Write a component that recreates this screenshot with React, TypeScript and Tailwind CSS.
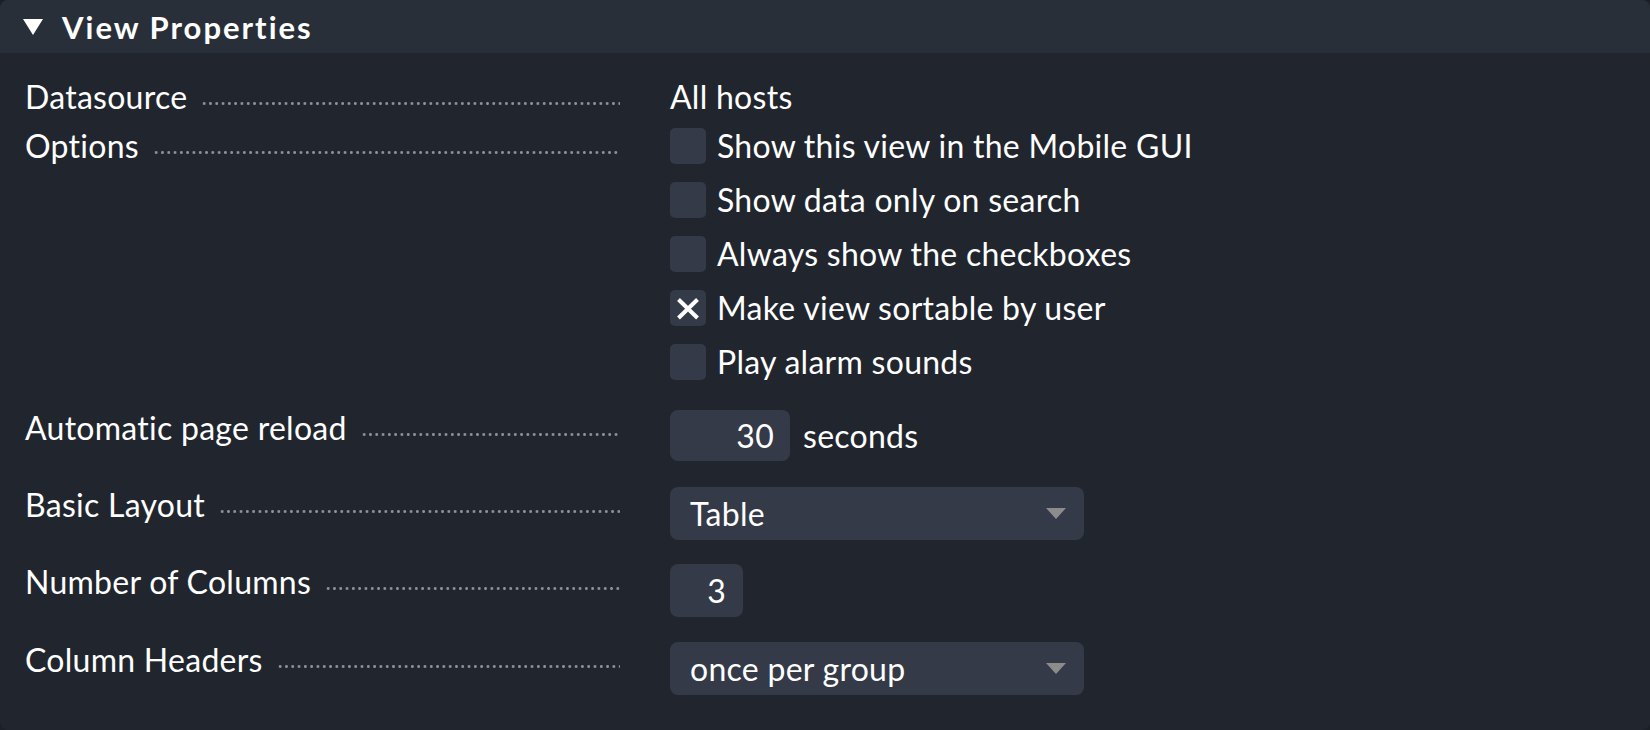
import React from "react";

const Dots: React.FC = () => (
  <span className="ml-[14px] mt-[23px] h-[3px] flex-1 bg-[radial-gradient(circle,#8f9297_1.2px,transparent_1.6px)] bg-[length:6.3px_3px] bg-repeat-x" />
);

const Row: React.FC<{ label: string; className?: string; children: React.ReactNode }> = ({
  label,
  className,
  children,
}) => (
  <div className={"flex items-start " + (className || "")}>
    <div className="flex w-[645px] shrink-0 items-start pr-[50px]">
      <span className="block whitespace-nowrap">{label}</span>
      <Dots />
    </div>
    <div>{children}</div>
  </div>
);

const Checkbox: React.FC<{ checked?: boolean }> = ({ checked }) => (
  <span className="flex h-[36px] w-[36px] shrink-0 items-center justify-center rounded-[5px] bg-[#343a47]">
    {checked && (
      <svg width="36" height="36" viewBox="0 0 36 36">
        <path d="M8.5 9.5 L27.5 28 M27.5 9.5 L8.5 28" stroke="#ffffff" strokeWidth="4" />
      </svg>
    )}
  </span>
);

const Select: React.FC<{ value: string }> = ({ value }) => (
  <div className="flex h-[53px] w-[414px] items-center justify-between rounded-[8px] bg-[#343a47] pl-[20px] pr-[18px]">
    <span>{value}</span>
    <svg width="20" height="11" viewBox="0 0 20 11">
      <path d="M0 0 L20 0 L10 11 Z" fill="#8c8c8c" />
    </svg>
  </div>
);

const options = [
  { text: "Show this view in the Mobile GUI", checked: false },
  { text: "Show data only on search", checked: false },
  { text: "Always show the checkboxes", checked: false },
  { text: "Make view sortable by user", checked: true },
  { text: "Play alarm sounds", checked: false },
];

export default function App() {
  return (
    <div className="h-[730px] w-[1650px] overflow-hidden bg-[#1b1f26] font-['Lato',sans-serif] text-[32px] leading-[36px] tracking-[0.27px] text-white">
      <div className="h-[730px] overflow-hidden rounded-[8px] bg-[#21262e]">
        {/* header */}
        <div className="flex h-[53px] items-center bg-[#292f39] pl-[23px]">
          <svg width="20" height="16" viewBox="0 0 20 16">
            <path d="M0 0 L20 0 L10 16 Z" fill="#ffffff" />
          </svg>
          <span className="ml-[19px] text-[31px] font-bold tracking-[2px]">View Properties</span>
        </div>

        <div className="pl-[25px] pt-[26px]">
          <Row label="Datasource">
            <div>All hosts</div>
          </Row>

          <Row label="Options" className="mt-[13px]">
            <div className="flex flex-col gap-[18px]">
              {options.map((o) => (
                <div key={o.text} className="flex h-[36px] items-center">
                  <Checkbox checked={o.checked} />
                  <span className="ml-[11px]">{o.text}</span>
                </div>
              ))}
            </div>
          </Row>

          <Row label="Automatic page reload" className="mt-[30px]">
            <div className="flex items-center">
              <div className="flex h-[51px] w-[120px] items-center justify-end rounded-[8px] bg-[#343a47] pr-[16px]">
                30
              </div>
              <span className="ml-[13px]">seconds</span>
            </div>
          </Row>

          <Row label="Basic Layout" className="mt-[26px]">
            <Select value="Table" />
          </Row>

          <Row label="Number of Columns" className="mt-[24px]">
            <div className="flex h-[53px] w-[73px] items-center justify-end rounded-[8px] bg-[#343a47] pr-[17px]">
              3
            </div>
          </Row>

          <Row label="Column Headers" className="mt-[25px]">
            <Select value="once per group" />
          </Row>
        </div>
      </div>
    </div>
  );
}
